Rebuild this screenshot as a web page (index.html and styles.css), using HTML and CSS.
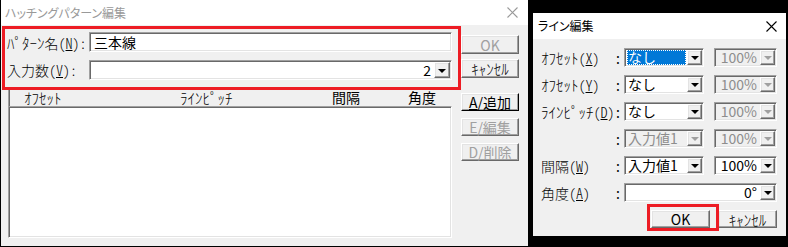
FILE: index.html
```html
<!DOCTYPE html>
<html>
<head>
<meta charset="utf-8">
<title>ハッチングパターン編集</title>
<link rel="stylesheet" href="styles.css">
</head>
<body>

<!-- main dialog -->
<div class="win win-main">
	<div class="titlebar inactive">
		<span class="title">ハッチングパターン編集</span>
		<svg class="close" width="11" height="11" viewBox="0 0 11 11"><path d="M0.5 0.5L10.5 10.5M10.5 0.5L0.5 10.5" stroke="#999" stroke-width="1.1" fill="none"/></svg>
	</div>
	<div class="client-main">
		<div class="col-left">
			<div class="field-row">
				<label class="lbl"><span class="hw">ﾊﾟﾀｰﾝ</span>名(<u>N</u>):</label>
				<div class="sunken edit">三本線</div>
			</div>
			<div class="field-row">
				<label class="lbl">入力数(<u>V</u>):</label>
				<div class="sunken combo">
					<span class="combo-val right">2</span>
					<span class="raised ddbtn"><i class="arrow"></i></span>
				</div>
			</div>
			<div class="lv-header">
				<span class="h1 hw">ｵﾌｾｯﾄ</span>
				<span class="h2 hw">ﾗｲﾝﾋﾟｯﾁ</span>
				<span class="h3">間隔</span>
				<span class="h4">角度</span>
			</div>
			<div class="sunken lv-body"></div>
		</div>
		<div class="col-btns">
			<button class="raised btn btn-ok disabled">OK</button>
			<button class="raised btn btn-cancel"><span class="hw">ｷｬﾝｾﾙ</span></button>
			<button class="raised btn btn-add"><u>A</u>/追加</button>
			<button class="raised btn btn-side disabled"><u>E</u>/編集</button>
			<button class="raised btn btn-side disabled"><u>D</u>/削除</button>
		</div>
	</div>
	<div class="mark mark-main"></div>
</div>

<!-- line edit dialog -->
<div class="win win-line">
	<div class="titlebar">
		<span class="title">ライン編集</span>
		<svg class="close" width="11" height="11" viewBox="0 0 11 11"><path d="M0.5 0.5L10.5 10.5M10.5 0.5L0.5 10.5" stroke="#000" stroke-width="1.1" fill="none"/></svg>
	</div>
	<div class="client-line">
		<div class="grid">
			<span class="lbl"><span class="hw">ｵﾌｾｯﾄ</span>(<u>X</u>)</span><span class="colon">:</span>
			<div class="sunken combo c1">
				<span class="combo-val"><span class="sel">なし</span></span>
				<span class="raised ddbtn"><i class="arrow"></i></span>
			</div>
			<div class="sunken combo c2 off">
				<span class="combo-val right">100%</span>
				<span class="raised ddbtn"><i class="arrow"></i></span>
			</div>

			<span class="lbl"><span class="hw">ｵﾌｾｯﾄ</span>(<u>Y</u>)</span><span class="colon">:</span>
			<div class="sunken combo c1">
				<span class="combo-val">なし</span>
				<span class="raised ddbtn"><i class="arrow"></i></span>
			</div>
			<div class="sunken combo c2 off">
				<span class="combo-val right">100%</span>
				<span class="raised ddbtn"><i class="arrow"></i></span>
			</div>

			<span class="lbl"><span class="hw">ﾗｲﾝﾋﾟｯﾁ</span>(<u>D</u>)</span><span class="colon">:</span>
			<div class="sunken combo c1">
				<span class="combo-val">なし</span>
				<span class="raised ddbtn"><i class="arrow"></i></span>
			</div>
			<div class="sunken combo c2 off">
				<span class="combo-val right">100%</span>
				<span class="raised ddbtn"><i class="arrow"></i></span>
			</div>

			<span class="lbl"></span><span class="colon">:</span>
			<div class="sunken combo c1 off">
				<span class="combo-val">入力値1</span>
				<span class="raised ddbtn"><i class="arrow"></i></span>
			</div>
			<div class="sunken combo c2 off">
				<span class="combo-val right">100%</span>
				<span class="raised ddbtn"><i class="arrow"></i></span>
			</div>

			<span class="lbl">間隔(<u>W</u>)</span><span class="colon">:</span>
			<div class="sunken combo c1">
				<span class="combo-val">入力値1</span>
				<span class="raised ddbtn"><i class="arrow"></i></span>
			</div>
			<div class="sunken combo c2">
				<span class="combo-val right">100%</span>
				<span class="raised ddbtn"><i class="arrow"></i></span>
			</div>

			<span class="lbl">角度(<u>A</u>)</span><span class="colon">:</span>
			<div class="sunken combo wide">
				<span class="combo-val right">0°</span>
				<span class="raised ddbtn"><i class="arrow"></i></span>
			</div>
		</div>
		<div class="line-btns">
			<button class="raised btn btn-lok">OK</button>
			<button class="raised btn btn-lcancel"><span class="hw">ｷｬﾝｾﾙ</span></button>
		</div>
	</div>
	<div class="mark mark-ok"></div>
</div>

</body>
</html>
```

FILE: styles.css
```css
body {
	margin: 0;
	width: 788px;
	height: 247px;
	background: #000;
	position: relative;
	overflow: hidden;
	font-family: "Noto Sans CJK JP", "Noto Sans", sans-serif;
	font-size: 13px;
	color: #000;
}
u {
	text-decoration: underline;
	text-underline-offset: 1px;
}
/* half-width kana are drawn a bit larger, like the bitmap UI font */
.hw {
	font-size: 15px;
	font-weight: 300;
	line-height: 1;
}

/* windows on the desktop */
.win {
	position: absolute;
	background: #f0f0f0;
	display: flex;
	flex-direction: column;
}
.win-main {
	left: 1px;
	top: 0;
	width: 527px;
	height: 246px;
}
.win-line {
	left: 533px;
	top: 13px;
	width: 253px;
	height: 223px;
}
.titlebar {
	background: #fff;
	height: 25px;
	flex: none;
	display: flex;
	align-items: center;
	justify-content: space-between;
	padding: 0 10px 0 4px;
}
.win-line .titlebar {
	height: 26px;
	padding: 0 9px 0 5px;
}
.title {
	font-size: 12px;
	font-feature-settings: "palt";
	line-height: 1;
}
.inactive .title {
	color: #999;
}
.close {
	display: block;
}

/* 3d borders */
.sunken {
	box-sizing: border-box;
	border: 1px solid;
	border-color: #a0a0a0 #fff #fff #a0a0a0;
	box-shadow: inset 1px 1px #696969, inset -1px -1px #e3e3e3;
	background: #fff;
}
.raised {
	box-sizing: border-box;
	border: 1px solid;
	border-color: #fff #696969 #696969 #fff;
	box-shadow: inset -1px -1px #a0a0a0, inset 1px 1px #e3e3e3;
	background: #f0f0f0;
}

/* main dialog */
.client-main {
	flex: 1;
	display: flex;
	gap: 9px;
	padding: 7px 9px 8px 6px;
}
.col-left {
	width: 445px;
	display: flex;
	flex-direction: column;
}
.field-row {
	display: flex;
	align-items: center;
	height: 20px;
	margin-bottom: 8px;
}
.lbl {
	white-space: nowrap;
	line-height: 1;
	font-size: 14px;
	font-weight: 300;
	font-feature-settings: "hwid";
}
.field-row .lbl {
	width: 82px;
	flex: none;
}
.edit {
	flex: 1;
	height: 20px;
	padding: 0 4px;
	font-size: 14px;
	line-height: 18px;
}
.combo {
	display: flex;
	align-items: stretch;
	padding: 1px;
	height: 20px;
}
.field-row .combo {
	flex: 1;
}
.combo-val {
	flex: 1;
	font-size: 14px;
	line-height: 16px;
	padding-left: 2px;
	white-space: nowrap;
}
.combo-val.right {
	text-align: right;
	padding-right: 3px;
}
.ddbtn {
	width: 16px;
	flex: none;
	display: flex;
	align-items: center;
	justify-content: center;
}
.arrow {
	width: 0;
	height: 0;
	border-left: 4px solid transparent;
	border-right: 4px solid transparent;
	border-top: 4px solid #000;
	margin-top: 1px;
}
.lv-header {
	height: 18px;
	margin-left: 1px;
	border-left: 1px solid #a0a0a0;
	box-shadow: inset 1px 0 #696969;
	display: grid;
	grid-template-columns: 171px 140px 60px 1fr;
	align-items: center;
	line-height: 1;
	font-size: 14px;
}
.h1 { padding-left: 15px; }
.h2 { padding-left: 0; }
.h3 { padding-left: 12px; }
.h4 { padding-left: 28px; }
.lv-body {
	margin-left: 1px;
	height: 132px;
}
.col-btns {
	width: 58px;
	display: flex;
	flex-direction: column;
}
.btn {
	font-family: inherit;
	font-size: 14px;
	color: #000;
	padding: 0;
	line-height: 1;
	width: 58px;
}
.btn.disabled {
	color: #a0a0a0;
}
.btn-ok {
	margin-top: 3px;
	height: 19px;
}
.btn-cancel {
	margin-top: 5px;
	height: 19px;
}
.btn-add {
	margin-top: 15px;
	height: 18px;
	border-color: #fff #000 #000 #fff;
}
.btn-side {
	margin-top: 7px;
	height: 18px;
}

/* line edit dialog */
.client-line {
	flex: 1;
	padding: 9px 9px 8px 8px;
	display: flex;
	flex-direction: column;
}
.grid {
	display: grid;
	grid-template-columns: 75px 8px 90px 63px;
	grid-auto-rows: 19px;
	row-gap: 8px;
	align-items: center;
}
.colon {
	line-height: 1;
	font-size: 14px;
}
.combo.c1 {
	width: 80px;
	height: 19px;
}
.combo.c2 {
	width: 63px;
	height: 19px;
}
.combo.wide {
	grid-column: 3 / 5;
	height: 19px;
}
.grid .combo-val {
	line-height: 15px;
}
.grid .ddbtn {
	width: 15px;
}
.combo.off {
	background: #f0f0f0;
	color: #8d8d8d;
}
.combo.off .arrow {
	border-top-color: #a0a0a0;
}
.sel {
	display: block;
	background: #0078d7;
	color: #fff;
	outline: 1px dotted #fff;
	outline-offset: -1px;
	margin: 0 1px 0 -1px;
	padding-left: 1px;
	height: 15px;
}
.line-btns {
	margin-top: 8px;
	display: flex;
	justify-content: flex-end;
	gap: 8px;
}
.btn-lok,
.btn-lcancel {
	width: 59px;
	height: 18px;
}

/* red annotation frames */
.mark {
	position: absolute;
	border: 3px solid #ed1c24;
	box-sizing: border-box;
	pointer-events: none;
}
.mark-main {
	left: 1px;
	top: 26px;
	width: 459px;
	height: 64px;
}
.mark-ok {
	left: 114px;
	top: 191px;
	width: 72px;
	height: 27px;
}
```
